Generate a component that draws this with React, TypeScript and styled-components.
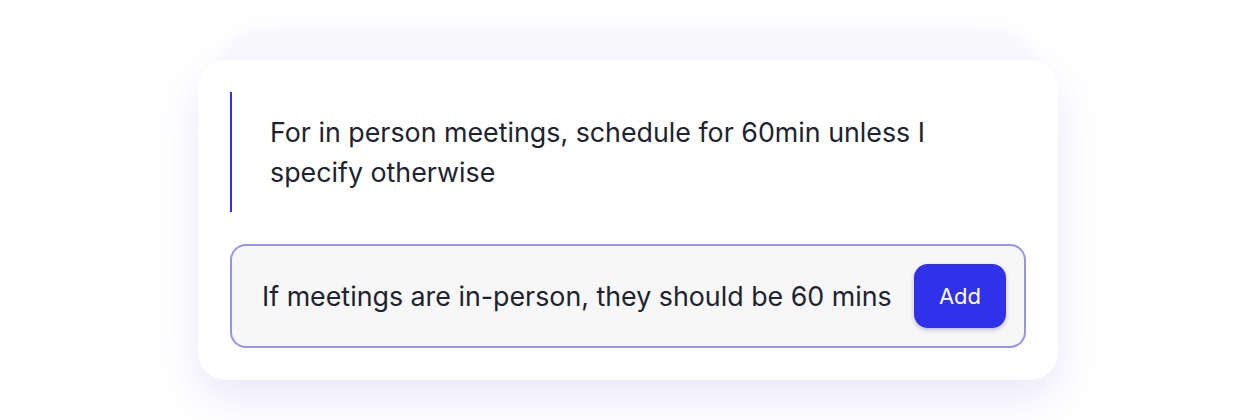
import React from "react";
import styled, { createGlobalStyle } from "styled-components";

const GlobalStyle = createGlobalStyle`
  html, body {
    margin: 0;
    padding: 0;
    background: #ffffff;
  }
  body {
    font-family: "Inter", "Noto Sans", sans-serif;
    -webkit-font-smoothing: antialiased;
  }
`;

const Page = styled.div`
  width: 1256px;
  height: 420px;
  display: flex;
  justify-content: center;
  overflow: hidden;
`;

const Stack = styled.div`
  position: relative;
  margin-top: 60px;
  width: 860px;
  height: 320px;
`;

const BackCard = styled.div`
  position: absolute;
  left: 33px;
  right: 33px;
  top: -30px;
  height: 140px;
  border-radius: 28px;
  background: #f9f9fd;
  box-shadow: 0 10px 30px rgba(100, 90, 230, 0.12);
`;

const Card = styled.div`
  position: relative;
  box-sizing: border-box;
  height: 100%;
  padding: 32px;
  display: flex;
  flex-direction: column;
  gap: 32px;
  border-radius: 28px;
  background: #ffffff;
  box-shadow: 0 18px 44px rgba(90, 80, 220, 0.13);
`;

const Quote = styled.div`
  border-left: 2px solid #3130ea;
  padding: 20px 0 20px 38px;
  font-size: 26.8px;
  line-height: 40px;
  color: #1e2330;
`;

const InputBox = styled.div`
  box-sizing: border-box;
  height: 104px;
  display: flex;
  align-items: center;
  justify-content: space-between;
  padding: 0 18px 0 30px;
  border: 2px solid #9693ee;
  border-radius: 16px;
  background: #f7f7f7;
`;

const InputText = styled.span`
  font-size: 26.8px;
  color: #1e2330;
`;

const AddButton = styled.button`
  width: 92px;
  height: 64px;
  border: none;
  border-radius: 14px;
  background: #3130ea;
  color: #ffffff;
  font-family: "Inter", "Noto Sans", sans-serif;
  font-size: 22px;
  box-shadow: 0 2px 4px rgba(20, 20, 80, 0.25);
  cursor: pointer;
`;

export default function App() {
  return (
    <>
      <GlobalStyle />
      <Page>
        <Stack>
          <BackCard />
          <Card>
            <Quote>
              For in person meetings, schedule for 60min unless I
              <br />
              specify otherwise
            </Quote>
            <InputBox>
              <InputText>If meetings are in-person, they should be 60 mins</InputText>
              <AddButton>Add</AddButton>
            </InputBox>
          </Card>
        </Stack>
      </Page>
    </>
  );
}
